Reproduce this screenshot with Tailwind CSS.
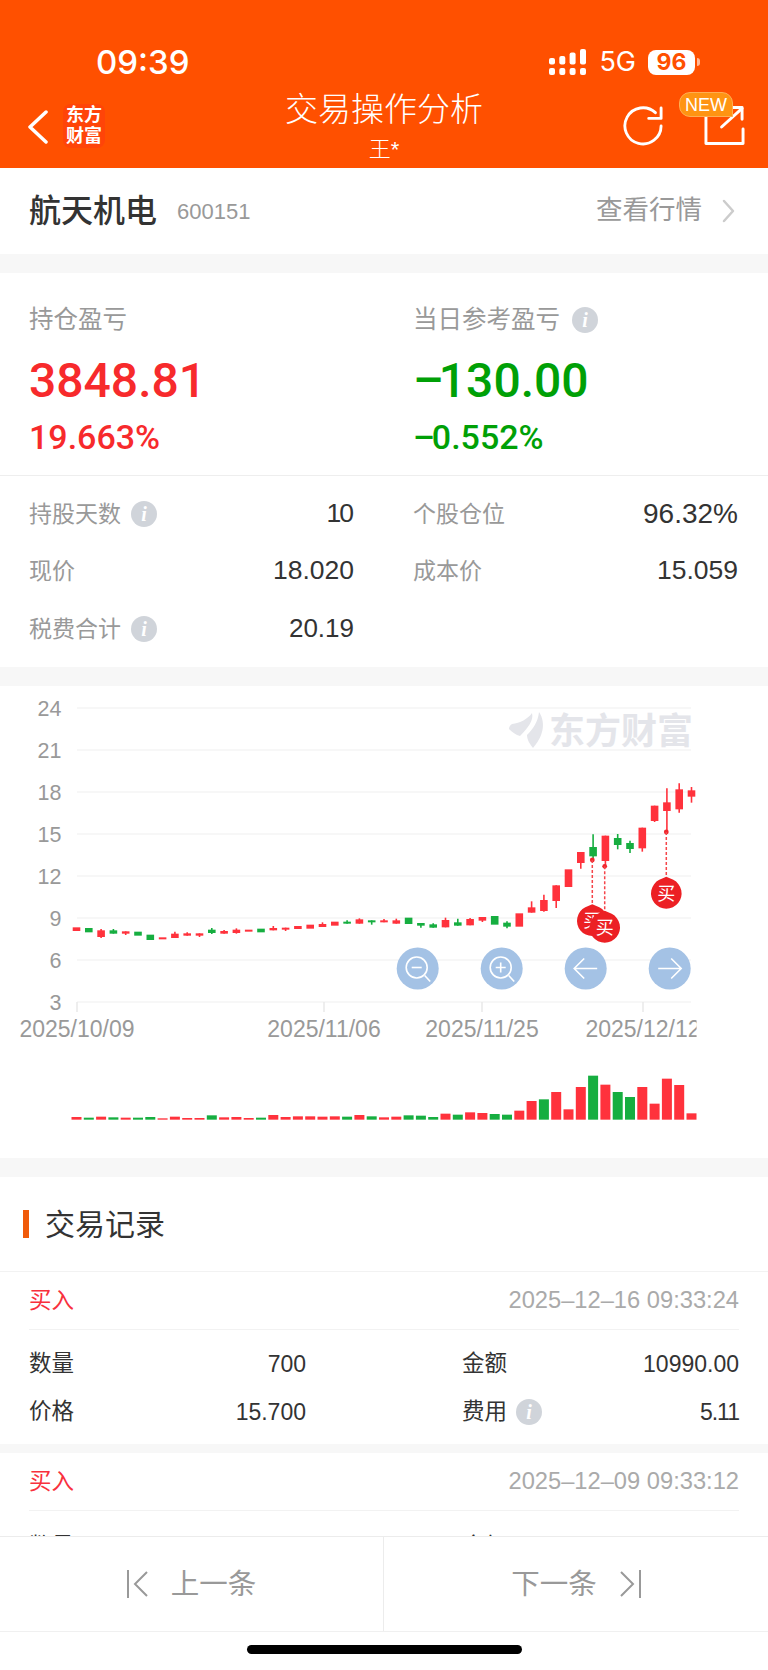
<!DOCTYPE html>
<html lang="zh-CN">
<head>
    <meta charset="UTF-8">
    <meta name="viewport" content="width=device-width, initial-scale=1.0">
    <title>交易操作分析</title>
    <script src="https://cdn.jsdelivr.net/npm/@tailwindcss/browser@4"></script>
</head>
<body class="bg-white font-['Liberation_Sans','Noto_Sans_CJK_SC',sans-serif]">

<div class="w-[768px] h-[1670px] flex flex-col overflow-hidden bg-[#f7f7f7]">
    <!-- Orange header -->
    <header class="h-[168px] shrink-0 bg-[#ff5000] text-white pt-[47px]">
        <div class="h-[30px] flex items-center justify-between pl-[96px] pr-[68px]">
            <span class="font-['Inter',sans-serif] font-medium text-[33px] leading-[30px]">09:39</span>
            <div class="flex items-center">
                <svg class="w-[38px] h-[27px]" viewBox="0 0 38 27" fill="#fff">
                    <rect x="0" y="19" width="6" height="7" rx="2"/><rect x="10.3" y="19" width="6" height="7" rx="2"/><rect x="20.6" y="19" width="6" height="7" rx="2"/><rect x="31" y="19" width="6" height="7" rx="2"/>
                    <rect x="0" y="9" width="6" height="6.5" rx="2"/><rect x="10.3" y="7" width="6" height="8.5" rx="2"/><rect x="20.6" y="3.5" width="6" height="12" rx="2"/><rect x="31" y="0" width="6" height="15.5" rx="2"/>
                </svg>
                <span class="ml-[12px] font-['Inter',sans-serif] text-[27px] leading-[30px]">5G</span>
                <span class="ml-[12px] w-[47px] h-[25px] bg-white rounded-[8px] flex items-center justify-center font-['Inter',sans-serif] font-bold text-[23px] text-[#ff5000]">96</span>
                <span class="ml-[2px] w-[3px] h-[8px] bg-white/60 rounded-r-full"></span>
            </div>
        </div>
        <div class="grid grid-cols-[1fr_auto_1fr] h-[78px] mt-[13px]">
            <div class="flex items-start pl-[28px] pt-[14px]">
                <svg class="w-[20px] h-[34px] mt-[6px]" viewBox="0 0 20 34" fill="none" stroke="#fff" stroke-width="3.5" stroke-linecap="round" stroke-linejoin="round"><path d="M18 2 2 17l16 15"/></svg>
                <div class="ml-[15px] w-[42px] h-[44px] rounded-[8px] bg-[#ff4408] flex items-center justify-center text-center font-bold text-[18px] leading-[21px]">东方<br>财富</div>
            </div>
            <div class="text-center">
                <div class="font-light text-[33px] leading-[40px]">交易操作分析</div>
                <div class="mt-[6px] font-light text-[22px] leading-[28px]">王*</div>
            </div>
            <div class="flex items-start justify-end pr-[23px] pt-[15px]">
                <svg class="w-[40px] h-[40px] mt-[1px]" viewBox="0 0 42 42" fill="none" stroke="#fff" stroke-width="3" stroke-linecap="round" stroke-linejoin="round"><path d="M40 21A19 19 0 1 1 34 7"/><path d="M27 13H40V2"/></svg>
                <div class="relative ml-[41px]">
                    <svg class="w-[41px] h-[42px]" viewBox="0 0 42 42" fill="none" stroke="#fff" stroke-width="3" stroke-linecap="round" stroke-linejoin="round"><path d="M2 8V39H40V24"/><path d="M18 22 39 3"/><path d="M28 2H39V14"/></svg>
                    <span class="absolute left-[-25px] top-[-13px] w-[54px] h-[25px] bg-[#ff9412] border border-[#ffae52] rounded-t-[11px] rounded-bl-[11px] flex items-center justify-center text-[18px] leading-none">NEW</span>
                </div>
            </div>
        </div>
    </header>

    <main class="flex-1 overflow-hidden flex flex-col gap-[19px]">
        <!-- Stock name -->
        <section class="h-[86px] shrink-0 bg-white flex items-center pl-[29px] pr-[33px]">
            <span class="font-medium text-[32px] text-[#333]">航天机电</span>
            <span class="ml-[20px] text-[22px] text-[#999]">600151</span>
            <span class="ml-auto text-[26.5px] text-[#999]">查看行情</span>
            <svg class="ml-[20px] w-[13px] h-[24px]" viewBox="0 0 13 24" fill="none" stroke="#ccc" stroke-width="2.5" stroke-linecap="round" stroke-linejoin="round"><path d="M2 2 11 12 2 22"/></svg>
        </section>

        <!-- Profit summary -->
        <section class="h-[394px] shrink-0 bg-white">
            <div class="h-[203px] border-b border-[#eee] pt-[31px] pl-[29px] pr-[30px] grid grid-cols-[325px_325px] gap-x-[59px]">
                <div>
                    <div class="text-[24.5px] leading-[32px] text-[#999]">持仓盈亏</div>
                    <div class="mt-[17px] font-['Roboto',sans-serif] font-medium text-[48px] leading-[56px] text-[#f72a2c]">3848.81</div>
                    <div class="mt-[8px] font-['Roboto',sans-serif] font-medium text-[34px] leading-[40px] text-[#f72a2c]">19.663%</div>
                </div>
                <div>
                    <div class="flex items-center text-[24.5px] leading-[32px] text-[#999]">当日参考盈亏
                        <span class="ml-[12px] w-[26px] h-[26px] rounded-full bg-[#d0d4da] flex items-center justify-center font-['Liberation_Serif',serif] italic font-bold text-[20px] text-white">i</span>
                    </div>
                    <div class="mt-[17px] font-['Roboto',sans-serif] font-medium text-[48px] leading-[56px] text-[#00a006]"><span class="mr-[-5px]">–</span>130.00</div>
                    <div class="mt-[8px] font-['Roboto',sans-serif] font-medium text-[34px] leading-[40px] text-[#00a006]"><span class="mr-[-3px]">–</span>0.552%</div>
                </div>
            </div>
            <div class="pt-[9px] pl-[29px] pr-[30px] grid grid-cols-[325px_325px] gap-x-[59px] auto-rows-[57.5px] text-[23px]">
                <div class="flex items-center justify-between">
                    <span class="flex items-center text-[#999]">持股天数<span class="ml-[10px] w-[26px] h-[26px] rounded-full bg-[#d0d4da] flex items-center justify-center font-['Liberation_Serif',serif] italic font-bold text-[20px] text-white">i</span></span>
                    <span class="mr-[2px] text-[26.5px] tracking-[-2px] text-[#333]">10</span>
                </div>
                <div class="flex items-center justify-between">
                    <span class="text-[#999]">个股仓位</span>
                    <span class="text-[28px] text-[#333]">96.32%</span>
                </div>
                <div class="flex items-center justify-between">
                    <span class="text-[#999]">现价</span>
                    <span class="text-[26.5px] text-[#333]">18.020</span>
                </div>
                <div class="flex items-center justify-between">
                    <span class="text-[#999]">成本价</span>
                    <span class="text-[26.5px] text-[#333]">15.059</span>
                </div>
                <div class="flex items-center justify-between">
                    <span class="flex items-center text-[#999]">税费合计<span class="ml-[10px] w-[26px] h-[26px] rounded-full bg-[#d0d4da] flex items-center justify-center font-['Liberation_Serif',serif] italic font-bold text-[20px] text-white">i</span></span>
                    <span class="text-[26px] text-[#333]">20.19</span>
                </div>
            </div>
        </section>

        <!-- K-line chart, drawn in page pixels -->
        <section class="h-[472px] shrink-0 bg-white">
            <svg id="chart" class="block w-[768px] h-[472px]" viewBox="0 686 768 472"></svg>
        </section>

        <!-- Trade records -->
        <section class="bg-white">
            <div class="h-[95px] flex items-center pl-[23px] border-b border-[#f2f2f2]">
                <span class="w-[6px] h-[28px] bg-[#f05a0a]"></span>
                <span class="ml-[16px] text-[30px] text-[#333]">交易记录</span>
            </div>
            <div class="px-[29px] h-[172px]">
                <div class="h-[58px] flex items-center justify-between border-b border-[#f2f2f2]">
                    <span class="text-[22.5px] text-[#f8303c]">买入</span>
                    <span class="text-[23.7px] text-[#aaa]">2025–12–16 09:33:24</span>
                </div>
                <div class="pt-[10px] grid grid-cols-[277px_277px] gap-x-[156px] auto-rows-[48px] text-[22.5px] text-[#333]">
                    <div class="flex items-center justify-between"><span>数量</span><span class="text-[23px]">700</span></div>
                    <div class="flex items-center justify-between"><span>金额</span><span class="text-[23px]">10990.00</span></div>
                    <div class="flex items-center justify-between"><span>价格</span><span class="text-[23px]">15.700</span></div>
                    <div class="flex items-center justify-between">
                        <span class="flex items-center">费用<span class="ml-[9px] w-[26px] h-[26px] rounded-full bg-[#d0d4da] flex items-center justify-center font-['Liberation_Serif',serif] italic font-bold text-[20px] text-white">i</span></span>
                        <span class="text-[23px] tracking-[-1px]">5.11</span>
                    </div>
                </div>
            </div>
            <div class="h-[9px] bg-[#f7f7f7]"></div>
            <div class="px-[29px]">
                <div class="h-[58px] flex items-center justify-between border-b border-[#f2f2f2]">
                    <span class="text-[22.5px] text-[#f8303c]">买入</span>
                    <span class="text-[23.7px] text-[#aaa]">2025–12–09 09:33:12</span>
                </div>
                <div class="pt-[12px] grid grid-cols-[277px_277px] gap-x-[156px] auto-rows-[48px] text-[22.5px] text-[#333]">
                    <div class="flex items-center justify-between"><span>数量</span><span class="text-[23px]">700</span></div>
                    <div class="flex items-center justify-between"><span>金额</span><span class="text-[23px]">10990.00</span></div>
                </div>
            </div>
        </section>
    </main>

    <!-- Prev / next -->
    <footer class="h-[134px] shrink-0 bg-white border-t border-[#ececec]">
        <div class="h-[95px] grid grid-cols-2 border-b border-[#f0f0f0] text-[28.5px] text-[#999]">
            <div class="flex items-center justify-center border-r border-[#ececec] gap-[23px]">
                <svg class="w-[21px] h-[28px]" viewBox="0 0 21 28" fill="none" stroke="#999" stroke-width="2"><path d="M1 0V28"/><path d="M20 2 8 14l12 12"/></svg>
                <span>上一条</span>
            </div>
            <div class="flex items-center justify-center gap-[23px]">
                <span>下一条</span>
                <svg class="w-[21px] h-[28px]" viewBox="0 0 21 28" fill="none" stroke="#999" stroke-width="2"><path d="M20 0V28"/><path d="M1 2l12 12L1 26"/></svg>
            </div>
        </div>
        <div class="flex justify-center pt-[13px]">
            <span class="w-[275px] h-[9px] rounded-full bg-black"></span>
        </div>
    </footer>
</div>

<script>
    const red = '#ff323c', green = '#16ae40';
    // measured off the chart at 3x: [colour, body top, body bottom, wick top, wick bottom]
    const candles = [
        ['r',742,753],['g',744,757],['r',751,771,747,774],['g',751,761,747,761],['r',754,761,754,765],['g',755,767],['g',764,780],['r',772,778],
        ['r',761,774,755,774],['r',760,767,757,767],['r',760,767,760,771],['g',749,759,744,762],['r',753,761,750,761],['r',749,759,745,761],['r',749,755],['g',746,757],
        ['r',744,751,738,751],['r',743,749,743,753],['r',738,747],['r',734,746],['r',732,741,727,741],['r',725,737],['g',725,731,721,731],['r',718,731,715,731],
        ['g',721,727,721,734],['r',721,727,717,727],['r',721,731,716,731],['g',713,732],['g',729,737,729,743],['g',733,743,730,743],['r',720,742,713,742],['g',727,737,716,737],
        ['r',717,736,714,736],['r',711,722,711,726],['g',708,734],['g',728,740,724,745],['r',700,740],['r',682,698,664,698],['r',660,693,644,695],['r',616,663,616,684],
        ['r',568,621],['r',516,549,516,566],['g',501,529,463,535],['r',467,543,467,556],['g',474,495,462,508],['g',489,507,482,519],['r',443,505,443,515],['r',377,423,377,426],
        ['r',367,393,325,455],['r',328,388,310,398],['r',331,350,321,368]
    ];
    // volume bar tops, same 3x scale
    const vol = [
        ['r',1311],['g',1313],['r',1310],['g',1312],['r',1313],['g',1313],['g',1311],['r',1315],['r',1310],['r',1314],['r',1314],['g',1306],['r',1312],
        ['r',1311],['r',1314],['g',1313],['r',1305],['r',1311],['r',1309],['r',1309],['r',1310],['r',1309],['g',1310],['r',1305],['g',1309],['r',1312],
        ['r',1310],['g',1306],['g',1307],['g',1311],['r',1301],['g',1304],['r',1297],['r',1299],['g',1302],['g',1304],['r',1292],['r',1263],['g',1258],
        ['r',1236],['r',1288],['r',1221],['g',1187],['r',1214],['g',1236],['g',1251],['r',1221],['r',1271],['r',1196],['r',1215],['r',1300]
    ];
    const cx = i => 76.5 + i * 12.3;
    const py = v => 680 + v / 3;
    const colour = c => c === 'r' ? red : green;
    let out = '<defs><clipPath id="labels"><rect x="0" y="1010" width="696.6" height="40"/></clipPath></defs>';

    // grid, price labels
    ['24','21','18','15','12','9','6','3'].forEach((label, i) => {
        const y = 708 + i * 42;
        out += `<line x1="77" x2="691" y1="${y}" y2="${y}" stroke="#f4f4f4" stroke-width="1.6"/>`;
        out += `<text x="61.5" y="${y + 7.5}" text-anchor="end" font-size="21.5" fill="#999">${label}</text>`;
    });
    // date ticks
    [[77,'2025/10/09'],[324,'2025/11/06'],[482,'2025/11/25'],[643,'2025/12/12']].forEach(([x, label]) => {
        out += `<line x1="${x}" x2="${x}" y1="1002" y2="1012" stroke="#e8e8e8" stroke-width="1.5"/>`;
        out += `<text x="${x}" y="1036.5" text-anchor="middle" font-size="23" fill="#999" clip-path="url(#labels)">${label}</text>`;
    });

    // watermark
    out += `<path fill="#e4e5ea" d="M539 712C547 724 542 738 533 748C530 744 527 740 527 735C533 729 538 722 539 712ZM532 713C534 720 528 728 520 736C516 735 512 732 509 729C509 727 510 725 512 724C520 723 528 719 532 713Z"/>`;
    out += `<text x="549" y="744" font-size="36" font-weight="700" fill="#e4e5ea">东方财富</text>`;

    // candles
    candles.forEach(([c, top, bottom, wickTop, wickBottom], i) => {
        const x = cx(i);
        if (wickTop !== undefined) out += `<line x1="${x}" x2="${x}" y1="${py(wickTop)}" y2="${py(wickBottom)}" stroke="${colour(c)}" stroke-width="1.6"/>`;
        out += `<rect x="${x - 3.8}" y="${py(top)}" width="7.6" height="${(bottom - top) / 3}" fill="${colour(c)}"/>`;
    });

    // volume
    vol.forEach(([c, top], i) => {
        out += `<rect x="${cx(i) - 5}" y="${py(top)}" width="10" height="${(1319 - top) / 3}" fill="${colour(c)}"/>`;
    });

    // buy markers: dot on the candle, dashed line, balloon
    [[592.3,860,920.7],[604.7,866.3,927.3],[666.3,832,893.3]].forEach(([x, dot, y]) => {
        out += `<circle cx="${x}" cy="${dot}" r="2.4" fill="#f0262c"/>`;
        out += `<line x1="${x}" x2="${x}" y1="${dot}" y2="${y - 15}" stroke="#f5454a" stroke-width="1.5" stroke-dasharray="3 2"/>`;
        out += `<path fill="#ec2024" d="M${x} ${y - 16.5}L${x + 7} ${y - 13.5}A15.3 15.3 0 1 1 ${x - 7} ${y - 13.5}Z"/>`;
        out += `<text x="${x}" y="${y + 6.5}" text-anchor="middle" font-size="18" fill="#fff">买</text>`;
    });

    // zoom and pan buttons
    const minus = '<path d="M-6 -1H4"/>', plus = '<path d="M-6 -1H4M-1 -6V4"/>';
    const lens = '<circle cx="-1" cy="-1" r="10.5"/><path d="M7 7 12.5 13"/>';
    [[417.7, lens + minus],[501.7, lens + plus],[585.7, '<path d="M11.5 0H-11.5M-1.5 -10-11.5 0-1.5 10"/>'],[669.7, '<path d="M-11.5 0H11.5M1.5 -10 11.5 0 1.5 10"/>']].forEach(([x, icon]) => {
        out += `<circle cx="${x}" cy="968.5" r="21" fill="#a4c2e5"/>`;
        out += `<g transform="translate(${x} 968.5)" fill="none" stroke="#fff" stroke-width="1.6">${icon}</g>`;
    });

    document.getElementById('chart').innerHTML = out;
</script>

</body>
</html>
